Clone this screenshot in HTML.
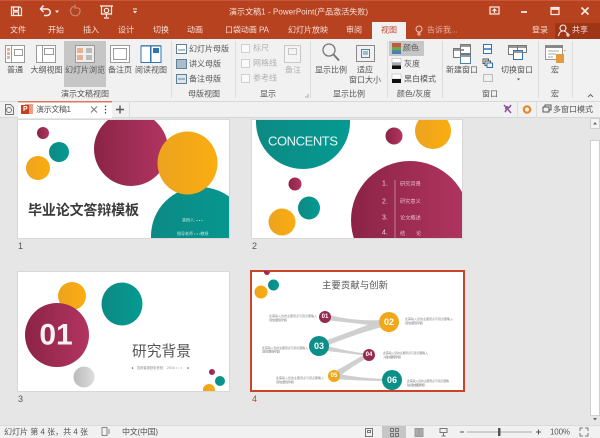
<!DOCTYPE html>
<html><head><meta charset="utf-8"><style>
html,body{margin:0;padding:0;width:600px;height:438px;overflow:hidden;background:#e6e6e6}
svg{display:block}
text{font-family:"Liberation Sans","Noto Sans CJK SC",sans-serif;font-size:8px;fill:#555;dominant-baseline:central}
.w text,text.w{fill:#f5dfd8}
.c{text-anchor:middle}
.g{fill:#b0b0b0}
</style></head><body>
<svg width="600" height="438" viewBox="0 0 600 438" xmlns="http://www.w3.org/2000/svg">
<defs>
<linearGradient id="m"><stop offset="0" stop-color="#8c2347"/><stop offset="1" stop-color="#b13560"/></linearGradient>
<linearGradient id="o"><stop offset="0" stop-color="#eca31f"/><stop offset="1" stop-color="#fbad10"/></linearGradient>
<linearGradient id="t"><stop offset="0" stop-color="#0d8a84"/><stop offset="1" stop-color="#049a92"/></linearGradient>
<linearGradient id="gr"><stop offset="0" stop-color="#bbb"/><stop offset="1" stop-color="#ddd"/></linearGradient>
<clipPath id="s1"><rect x="18" y="120" width="211" height="118"/></clipPath>
<clipPath id="s2"><rect x="252" y="120" width="210" height="118"/></clipPath>
<clipPath id="s3"><rect x="18" y="272" width="211" height="119"/></clipPath>
<clipPath id="s4"><rect x="251" y="271" width="213" height="120"/></clipPath>
</defs>

<!-- title bar -->
<rect width="600" height="39" fill="#b7421f"/>
<rect width="600" height="1" fill="#c9553a"/>
<rect x="555" y="23" width="45" height="16" fill="#9f3517"/>
<rect x="372" y="22" width="34" height="17" fill="#f1f1f1"/>
<!-- QAT -->
<g fill="none" stroke="#fbeee9" stroke-width="1.2">
<path d="M11.5 7h8.5l1.5 1.5v7h-10z"/><path d="M13.5 7.5v3h5v-3M13.5 15v-3h5v3"/>
<path d="M41 9h6a3.2 3.2 0 0 1 0 6.5h-3" stroke-width="1.5"/><path d="M43.5 5.5L40.5 9l3 3" stroke-width="1.5"/>
<path d="M79 8a4.8 4.8 0 1 1-4-1.800M75 4.500v3.500h3.500" stroke="#c98670"/>
<path d="M100 6h13M101.500 6v8h10V6M106.500 14v3M104 18h5"/><circle cx="106.500" cy="10.500" r="2.200"/>
</g>
<path d="M55 10.500h4l-2 2.500zM133 11h4l-2 2.500z" fill="#fbeee9"/><rect x="133" y="8.500" width="4" height="1" fill="#fbeee9"/>
<text class="w" x="229" y="12" textLength="139">演示文稿1 - PowerPoint(产品激活失败)</text>
<!-- window controls -->
<g fill="none" stroke="#fbeee9" stroke-width="1.2">
<rect x="490" y="7" width="9" height="7"/><path d="M494.500 13V9M492.500 11l2-2 2 2"/>
<path d="M521 12h6" stroke-width="1.800"/>
<rect x="551" y="7.500" width="8" height="7"/><path d="M551 9h8" stroke-width="1.800"/>
<path d="M581.500 7.500l7 7M588.500 7.500l-7 7" stroke-width="1.600"/>
</g>
<!-- tabs -->
<g class="w">
<text x="10" y="30">文件</text><text x="48" y="30">开始</text><text x="83" y="30">插入</text><text x="118" y="30">设计</text><text x="153" y="30">切换</text><text x="187" y="30">动画</text>
<text x="225" y="30" textLength="44">口袋动画 PA</text><text x="288" y="30">幻灯片放映</text><text x="346" y="30">审阅</text>
<text x="427" y="30" style="fill:#e8b0a0">告诉我...</text><text x="532" y="30">登录</text><text x="572" y="30">共享</text>
</g>
<text x="381" y="30" style="fill:#c0482a">视图</text>
<g fill="none" stroke="#eec0b2"><circle cx="419" cy="29" r="3"/><path d="M418 33h2v2h-2z"/></g>
<g fill="none" stroke="#fbeee9" stroke-width="1.100"><circle cx="563" cy="28" r="3"/><path d="M558.500 36c.5-3.500 2.500-5 4.500-5s3.500 1 4.500 3M566 35h4M568 33v4"/></g>

<!-- ribbon -->
<rect y="39" width="600" height="63" fill="#f1f1f1"/>
<rect y="101" width="600" height="1" fill="#d8d8d8"/>
<rect x="64" y="41" width="42" height="46" fill="#c6c6c6"/>
<rect x="389" y="41" width="35" height="15" fill="#c6c6c6"/>
<g fill="#dcdcdc"><rect x="171" y="41" width="1" height="57"/><rect x="235" y="41" width="1" height="57"/><rect x="310" y="41" width="1" height="57"/><rect x="387" y="41" width="1" height="57"/><rect x="442" y="41" width="1" height="57"/><rect x="538" y="41" width="1" height="57"/><rect x="572" y="41" width="1" height="57"/></g>

<!-- view icons -->
<g fill="#fff" stroke="#9a9a9a" stroke-width="1">
<rect x="5.500" y="45.500" width="19" height="17"/><rect x="36.500" y="45.500" width="19" height="17"/><rect x="75.500" y="45.500" width="19" height="17" fill="#eee"/><rect x="110.500" y="45.500" width="19" height="17"/><rect x="141.500" y="45.500" width="19" height="17"/>
<path d="M11.500 45.500v17M42.500 45.500v17" fill="none"/>
<rect x="14.500" y="49.500" width="8" height="6"/><rect x="44.500" y="48.500" width="9" height="6"/>
<rect x="113.500" y="48.500" width="13" height="11"/>
</g>
<g fill="#e7b08f"><rect x="7" y="48" width="3" height="3"/><rect x="7" y="52" width="3" height="3"/><rect x="7" y="56" width="3" height="3"/><rect x="77" y="48" width="6" height="5"/><rect x="77" y="55" width="6" height="5"/></g>
<g fill="#bbb"><rect x="86" y="48" width="6" height="5"/><rect x="86" y="55" width="6" height="5"/></g>
<path d="M141 46h9.500v16.500H141zM151 46h10v16.500h-10z" fill="#fff" stroke="#2e75b6"/><rect x="153" y="48" width="6" height="5" fill="#2e75b6"/>
<text class="c" x="15" y="70">普通</text><text class="c" x="46.500" y="70">大纲视图</text><text class="c" x="85" y="70">幻灯片浏览</text><text class="c" x="120" y="70">备注页</text><text class="c" x="151" y="70">阅读视图</text>
<text class="c" x="85" y="94">演示文稿视图</text>
<!-- master -->
<g stroke="#5f7f97" fill="#fff"><rect x="176.500" y="44.500" width="10" height="9"/><rect x="176.500" y="59.500" width="10" height="9" fill="#a9bdcc"/><rect x="176.500" y="74.500" width="10" height="9" fill="#dce4ea"/></g>
<path d="M178 50h7M178 79h7" stroke="#5f7f97"/>
<text x="189" y="49">幻灯片母版</text><text x="189" y="64">讲义母版</text><text x="189" y="79">备注母版</text>
<text class="c" x="204" y="94">母版视图</text>
<!-- show -->
<g fill="#fafafa" stroke="#d0d0d0"><rect x="241.500" y="44.500" width="8" height="8"/><rect x="241.500" y="59.500" width="8" height="8"/><rect x="241.500" y="74.500" width="8" height="8"/></g>
<text class="g" x="253" y="48">标尺</text><text class="g" x="253" y="63">网格线</text><text class="g" x="253" y="78">参考线</text>
<rect x="284.500" y="45.500" width="16" height="17" fill="#f4f4f4" stroke="#c8c8c8"/><rect x="288.500" y="48.500" width="8" height="6" fill="none" stroke="#c8c8c8"/>
<text class="g c" x="293" y="70">备注</text>
<text class="c" x="268" y="94">显示</text>
<!-- zoom -->
<g fill="none" stroke="#777"><circle cx="329" cy="50" r="6" stroke-width="1.300"/><path d="M333.500 54.500l5.500 6" stroke-width="2"/>
<rect x="356.500" y="45.500" width="18" height="16" stroke="#8a8a8a"/><rect x="361.500" y="49.500" width="8" height="8" stroke="#4f81a5"/><path d="M363 52h5M363 54h5" stroke="#4f81a5"/></g>
<text class="c" x="331" y="70">显示比例</text><text class="c" x="365" y="70">适应</text><text class="c" x="365" y="80">窗口大小</text>
<text class="c" x="349" y="94">显示比例</text>
<path d="M305 97h3v-3" fill="none" stroke="#aaa"/>
<!-- colour -->
<rect x="392" y="43" width="9" height="4" fill="#c8553d"/><rect x="392" y="47" width="9" height="3.500" fill="#6aa84f"/><rect x="392" y="50.500" width="9" height="3.500" fill="#4a7ebb"/>
<rect x="392" y="58.500" width="9" height="4" fill="#fff" stroke="#aaa" stroke-width=".5"/><rect x="392" y="62.500" width="9" height="3" fill="#aaa"/><rect x="392" y="65.500" width="9" height="3.500" fill="#111"/>
<rect x="392" y="74" width="9" height="5" fill="#fff" stroke="#aaa" stroke-width=".5"/><rect x="392" y="79" width="9" height="4" fill="#111"/>
<text x="403" y="48">颜色</text><text x="404" y="64">灰度</text><text x="404" y="79">黑白模式</text>
<text class="c" x="414" y="94">颜色/灰度</text>
<!-- window -->
<g fill="#fff" stroke="#777"><rect x="453.500" y="48.500" width="10" height="9"/><rect x="460.500" y="44.500" width="10" height="9"/><rect x="460.500" y="54.500" width="10" height="9" stroke="#4f81a5"/></g>
<path d="M453 50h11M460 46h11M460 56h11" stroke="#777" stroke-width="1.500"/>
<text class="c" x="462" y="70">新建窗口</text>
<g fill="#fff" stroke="#2e75b6"><rect x="483.500" y="44.500" width="8" height="9"/><path d="M484 49h7" stroke-width="1.500"/></g>
<g fill="none" stroke="#555"><rect x="483" y="59" width="5.500" height="4.500"/><rect x="485" y="61" width="5.500" height="4.500" fill="#f1f1f1"/><rect x="487" y="63" width="5.500" height="4.500" fill="#f1f1f1" stroke="#2e75b6"/></g>
<rect x="483.500" y="74.500" width="9" height="7" fill="none" stroke="#bbb"/>
<text class="c" x="490" y="94">窗口</text>
<g fill="#fff" stroke="#777"><rect x="508.500" y="45.500" width="9" height="9"/><rect x="517.500" y="45.500" width="9" height="7"/><rect x="513.500" y="50.500" width="9" height="9" stroke="#2e75b6"/></g>
<path d="M508 47h19M513 52h10" stroke="#777" stroke-width="1.500"/>
<text class="c" x="517" y="70">切换窗口</text>
<path d="M517 78.500h3l-1.500 2z" fill="#555"/>
<rect x="545.500" y="45.500" width="17" height="14" fill="#fff" stroke="#999"/><rect x="545" y="45" width="18" height="3" fill="#888"/>
<path d="M548 51h11M548 54h8M548 57h5" stroke="#aaa"/><rect x="556" y="54" width="8" height="9" fill="#e39b3f"/><path d="M564 51l1.500-1" stroke="#e39b3f"/>
<text class="c" x="555" y="70">宏</text><text class="c" x="555" y="94">宏</text>
<path d="M588 97l2.500-2.500 2.500 2.500" fill="none" stroke="#666"/>

<!-- doc tab row -->
<rect y="102" width="600" height="16" fill="#f1f1f1"/>
<rect y="117" width="600" height="1" fill="#d6d6d6"/>
<rect x="18" y="102" width="94" height="16" fill="#fff"/><rect x="18" y="101" width="94" height="1.500" fill="#d9785a"/>
<rect x="129" y="102" width="1" height="16" fill="#ddd"/>
<path d="M5.500 104.500h5l3 3v7h-8z" fill="none" stroke="#777"/><circle cx="9" cy="110" r="2.500" fill="none" stroke="#777"/>
<rect x="25" y="104" width="8" height="10" fill="#e8a08a"/><rect x="21" y="105" width="8" height="9" fill="#c5401d"/>
<text x="23" y="109.500" style="font-size:7px;font-weight:bold;fill:#fff">P</text>
<text x="36" y="109.500" textLength="35">演示文稿1</text>
<path d="M91 106.500l6 6M97 106.500l-6 6" stroke="#777" fill="none"/>
<path d="M105.500 105.500v1.500M105.500 108.800v1.500M105.500 112v1.500" stroke="#444" stroke-width="1.200"/>
<path d="M116 109.500h8M120 105.500v8" stroke="#555" stroke-width="1.400"/>
<path d="M504 105l7 8M511 105l-2 3M505 112l2-3" stroke="#8e5aa0" stroke-width="1.600" fill="none"/><circle cx="507" cy="108" r="2" fill="#8e5aa0"/>
<rect x="517" y="102" width="1" height="16" fill="#ddd"/>
<circle cx="527" cy="109.500" r="3.200" fill="none" stroke="#e8862a" stroke-width="2.200"/>
<rect x="536" y="102" width="1" height="16" fill="#ddd"/>
<g fill="none" stroke="#555"><rect x="543" y="107" width="6" height="5"/><path d="M545 107v-2h6v5h-2"/></g>
<text x="553" y="109.500">多窗口模式</text>

<!-- scroller -->
<rect x="590" y="118" width="10" height="307" fill="#e6e6e6"/>
<rect x="590.500" y="118.500" width="9" height="10" fill="#f4f4f4" stroke="#cfcfcf"/>
<path d="M593 124.500l2-2.500 2 2.500z" fill="#666"/>
<rect x="590.500" y="140.500" width="9" height="275" fill="#fff" stroke="#cfcfcf"/>
<path d="M593 418l2 2.500 2-2.500z" fill="#666"/>

<!-- slide 1 -->
<rect x="17.500" y="119.500" width="212" height="119" fill="#fff" stroke="#d8d8d8"/>
<g clip-path="url(#s1)">
<circle cx="131" cy="149" r="37" fill="url(#m)"/>
<circle cx="200" cy="236" r="49" fill="url(#t)"/>
<ellipse cx="187.500" cy="163" rx="30" ry="31.500" fill="url(#o)"/>
<circle cx="43" cy="133" r="6" fill="url(#m)"/><circle cx="59" cy="152" r="10" fill="url(#t)"/><circle cx="38" cy="168" r="12" fill="url(#o)"/>
<text x="28" y="210" textLength="111" style="font-size:14px;font-weight:bold;fill:#3a3a3a">毕业论文答辩模板</text>
<text x="182" y="220" style="font-size:4px;fill:#c8e8e5">答辩人: • • •</text>
<text x="177" y="233.500" style="font-size:4px;fill:#c8e8e5">指导老师 • • •教授</text>
</g>
<text x="18" y="246" style="font-size:9px">1</text>

<!-- slide 2 -->
<rect x="251.500" y="119.500" width="211" height="119" fill="#fff" stroke="#d8d8d8"/>
<g clip-path="url(#s2)">
<circle cx="303" cy="122" r="47" fill="url(#t)"/>
<text x="268" y="141" textLength="70" style="font-size:13px;fill:#e8f6f5">CONCENTS</text>
<circle cx="394" cy="136" r="8.500" fill="url(#m)"/><circle cx="433" cy="131" r="18" fill="url(#o)"/>
<circle cx="295" cy="184" r="6.500" fill="url(#m)"/><ellipse cx="309" cy="208" rx="11" ry="11.500" fill="url(#t)"/><circle cx="282" cy="222" r="13.500" fill="url(#o)"/>
<circle cx="410" cy="220" r="59" fill="url(#m)"/>
<rect x="394.500" y="180" width="1" height="58" fill="#c57a96"/>
<text x="382" y="184" style="font-size:7px;fill:#f0ccd9">1.</text><text x="382" y="202" style="font-size:7px;fill:#f0ccd9">2.</text><text x="382" y="218" style="font-size:7px;fill:#f0ccd9">3.</text><text x="382" y="233" style="font-size:7px;fill:#f0ccd9">4.</text>
<text x="400" y="184.500" style="font-size:5.200px;fill:#e8bccb">研究背景</text><text x="400" y="202" style="font-size:5.200px;fill:#e8bccb">研究意义</text><text x="400" y="218.500" style="font-size:5.200px;fill:#e8bccb">论文概述</text><text x="400" y="234" style="font-size:5.200px;fill:#e8bccb">结</text><text x="416" y="234" style="font-size:5.200px;fill:#e8bccb">论</text>
</g>
<text x="252" y="246" style="font-size:9px">2</text>

<!-- slide 3 -->
<rect x="17.500" y="271.500" width="212" height="120" fill="#fff" stroke="#d8d8d8"/>
<g clip-path="url(#s3)">
<circle cx="72" cy="296" r="14" fill="url(#o)"/><ellipse cx="122" cy="304" rx="20.500" ry="21.500" fill="url(#t)"/>
<circle cx="57" cy="335" r="32" fill="url(#m)"/>
<text class="c" x="56" y="335" style="font-size:30px;font-weight:bold;fill:#f8f0f3">01</text>
<circle cx="84" cy="377" r="10.500" fill="url(#gr)"/>
<text x="132" y="352" textLength="59" style="font-size:14.700px;fill:#555">研究背景</text>
<circle cx="132.500" cy="368" r=".8" fill="#555"/><circle cx="188" cy="368" r=".8" fill="#555"/>
<text x="137" y="368" textLength="26" style="font-size:3.200px;fill:#888">答辩者德默彩资校</text>
<text x="167" y="368" textLength="15" style="font-size:3.200px;fill:#888">2016 • • •</text>
<circle cx="212" cy="372" r="3" fill="url(#m)"/><circle cx="220" cy="381" r="5" fill="url(#t)"/><circle cx="209" cy="390" r="6" fill="url(#o)"/>
</g>
<text x="18" y="399" style="font-size:9px">3</text>

<!-- slide 4 -->
<rect x="251" y="271" width="213" height="120" fill="#fff" stroke="#c8452a" stroke-width="2"/>
<g clip-path="url(#s4)">
<circle cx="267" cy="272" r="3" fill="url(#m)"/><circle cx="273.500" cy="285" r="5.500" fill="url(#t)"/><circle cx="261" cy="292" r="6.500" fill="url(#o)"/>
<text x="322" y="285" textLength="66" style="font-size:9.400px;fill:#555">主要贡献与创新</text>
<g fill="#cfcfcf">
<path d="M325 314Q355 322 385 320L385 327Q355 323 325 320z"/>
<path d="M319 343Q355 330 385 318L386 326Q355 334 319 349z"/>
<path d="M319 344Q345 351 369 354L369 356Q345 353 319 350z"/>
<path d="M332 373Q352 362 368 352L371 356Q352 366 336 379z"/>
<path d="M334 373Q362 379 392 379L392 381Q362 381 334 379z"/>
</g>
<circle cx="325" cy="317" r="6" fill="#962b50"/><circle cx="389" cy="322" r="10" fill="#f0a71a"/><circle cx="319" cy="346" r="10" fill="#0b8f88"/><circle cx="369" cy="355" r="6" fill="#962b50"/><circle cx="334" cy="376" r="6" fill="#f0a71a"/><circle cx="392" cy="380" r="10" fill="#0b8f88"/>
<text class="c" x="325" y="317" style="font-size:6px;fill:#fff;font-weight:bold">01</text><text class="c" x="389" y="322" style="font-size:9px;fill:#fff;font-weight:bold">02</text><text class="c" x="319" y="346" style="font-size:9px;fill:#fff;font-weight:bold">03</text><text class="c" x="369" y="355" style="font-size:6px;fill:#fff;font-weight:bold">04</text><text class="c" x="334" y="376" style="font-size:6px;fill:#fff;font-weight:bold">05</text><text class="c" x="392" y="380" style="font-size:9px;fill:#fff;font-weight:bold">06</text>
<text x="269" y="316" textLength="48" style="font-size:3px;fill:#888">此需输入您的主要观点与观点要略入</text><text x="269" y="320" textLength="18" style="font-size:3px;fill:#888">您的主要观点内容</text>
<text x="405" y="319" textLength="48" style="font-size:3px;fill:#888">此需输入您的主要观点与观点要略入</text><text x="405" y="323" textLength="18" style="font-size:3px;fill:#888">您的主要观点内容</text>
<text x="262" y="348" textLength="46" style="font-size:3px;fill:#888">此需输入您的主要观点与观点要略入</text><text x="262" y="351.500" textLength="18" style="font-size:3px;fill:#888">您的主要观点内容</text>
<text x="383" y="353" textLength="45" style="font-size:3px;fill:#888">此需输入您的主要观点与观点要略入</text><text x="383" y="357" textLength="18" style="font-size:3px;fill:#888">入您的主要观点内容</text>
<text x="276" y="378" textLength="48" style="font-size:3px;fill:#888">此需输入您的主要观点与观点要略入</text><text x="276" y="382" textLength="18" style="font-size:3px;fill:#888">您的主要观点内容</text>
<text x="407" y="381" textLength="42" style="font-size:3px;fill:#888">此需输入您的主要观点与观点要略</text><text x="407" y="385" textLength="18" style="font-size:3px;fill:#888">输入您的主要观点内容</text>
</g>
<text x="252" y="399" style="font-size:9px;fill:#c8452a">4</text>

<!-- status bar -->
<rect y="425" width="600" height="13" fill="#f1f1f1"/>
<rect y="425" width="600" height="1" fill="#dadada"/>
<text x="4" y="432" textLength="84">幻灯片 第 4 张，共 4 张</text>
<path d="M102 427.500h5v8h-5zM109 429v5" fill="none" stroke="#888"/>
<text x="122" y="432" textLength="36">中文(中国)</text>
<rect x="382" y="426" width="24" height="12" fill="#c6c6c6"/>
<g fill="none" stroke="#777">
<rect x="365.500" y="428.500" width="7" height="8"/><rect x="367.500" y="430.500" width="3" height="2"/>
<rect x="390.500" y="428.500" width="3" height="3"/><rect x="395.500" y="428.500" width="3" height="3"/><rect x="390.500" y="433.500" width="3" height="3"/><rect x="395.500" y="433.500" width="3" height="3"/>
<path d="M415 428.500h4v8h-4zM419 428.500h4v8h-4z" fill="#aaa" stroke="#999"/>
<path d="M440 428.500h7v4h-7zM443.500 432.500v3M441.500 436h4"/>
</g>
<path d="M460 432h4M536 432h5M538.500 429.500v5" stroke="#555"/>
<rect x="467" y="431.500" width="65" height="1" fill="#aaa"/><rect x="498" y="428" width="2.500" height="8" fill="#555"/>
<text x="550" y="432" textLength="20">100%</text>
<path d="M580 431v-3h3M585 428h3v3M588 433v3h-3M583 436h-3v-3" fill="none" stroke="#777"/>
</svg>
</body></html>
